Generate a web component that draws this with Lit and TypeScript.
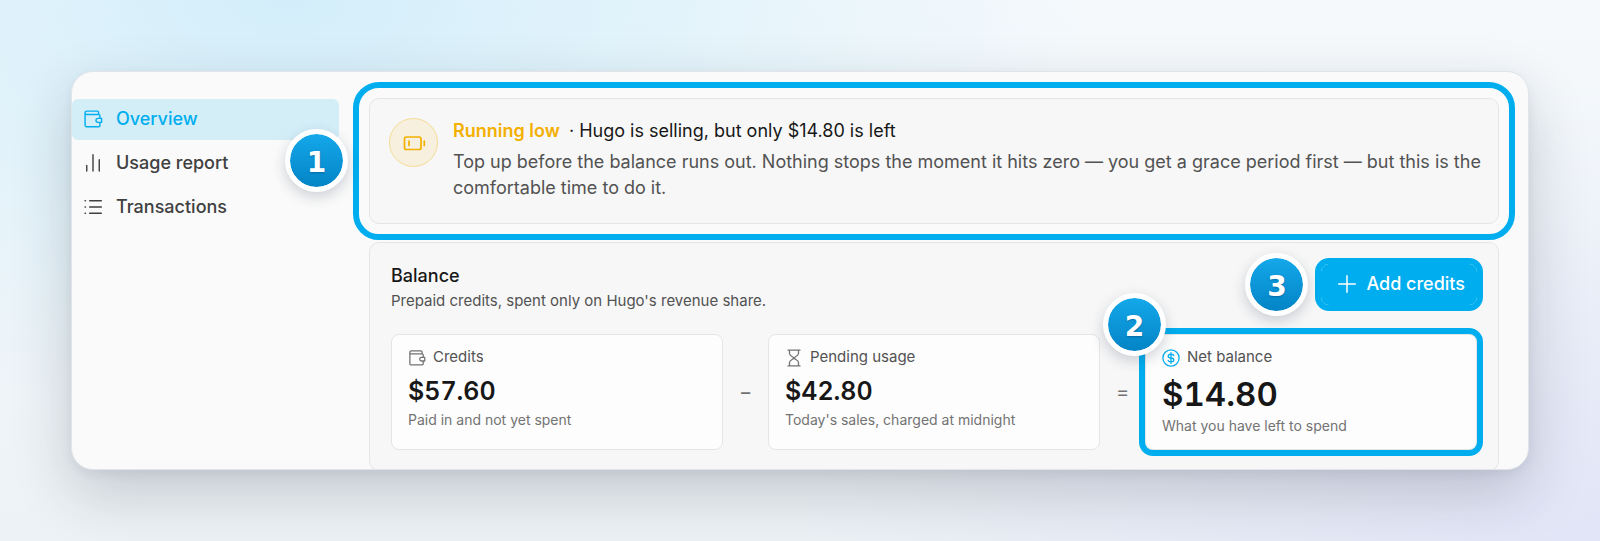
import { LitElement, html, css, svg } from "lit";
import { customElement, property } from "lit/decorators.js";

const icons: Record<string, unknown> = {
  wallet: svg`<path d="M2.500 4.500v15A1.800 1.800 0 0 0 4.300 21.300H18.800A1.500 1.500 0 0 0 20.300 19.800V16.200M20.300 11V8A1.500 1.500 0 0 0 18.800 6.500H4.500A2 2 0 0 1 2.500 4.500 2 2 0 0 1 4.500 2.500H17.200A1.500 1.500 0 0 1 18.700 4V6.500M18 11.200H22.300V16H18A2.400 2.400 0 0 1 18 11.200z"/>`,
  bars: svg`<path d="M4.500 15v6.500M12 2v19.500M19.500 8v13.500"/>`,
  list: svg`<path d="M8 4.500h14M8 12h14M8 19.500h14M2.500 4.500h.5M2.500 12h.5M2.500 19.500h.5"/>`,
  battery: svg`<rect x="2.500" y="6" width="16.500" height="12.500" rx="1.800"/><path d="M7 10v4.500M22.300 10v4.500"/>`,
  hourglass: svg`<path d="M4 1.500h16M4 22.500h16M6 1.500V6C6 9 10.500 10 12 12C13.500 14 18 15 18 18V22.500M18 1.500V6C18 9 13.500 10 12 12C10.500 14 6 15 6 18V22.500"/>`,
  dollar: svg`<circle cx="12" cy="12" r="10.800"/><path d="M12 5v14M15.800 8.800C15.500 7.500 14 7 12 7C9.700 7 8.200 7.900 8.200 9.500C8.200 11.200 9.800 11.700 12 12C14.200 12.300 15.800 12.800 15.800 14.500C15.800 16.100 14.300 17 12 17C10 17 8.500 16.500 8.200 15.200"/>`,
  plus: svg`<path d="M12 1v22M1 12h22"/>`,
};

@customElement("line-icon")
class LineIcon extends LitElement {
  @property() name = "";
  @property() weight = "1.7";
  static styles = css`
    :host { display: block; flex: none; }
    svg { display: block; width: 100%; height: 100%; fill: none; stroke: currentColor; stroke-linecap: round; stroke-linejoin: round; }
  `;
  render() {
    return html`<svg viewBox="0 0 24 24" stroke-width=${this.weight} aria-hidden="true">${icons[this.name]}</svg>`;
  }
}

@customElement("step-badge")
class StepBadge extends LitElement {
  @property() step = "";
  static styles = css`
    :host {
      box-sizing: border-box; display: flex; align-items: center; justify-content: center;
      width: 63px; height: 63px; padding-top: 4px; border: 5px solid #fff; border-radius: 50%;
      background: linear-gradient(#14a8ea, #0384c6) padding-box, #fff border-box;
      box-shadow: 0 5px 14px rgba(20, 40, 70, 0.2);
      color: #fff; font: 700 28px/34px "DejaVu Sans", sans-serif;
      text-shadow: 0 1px 2px rgba(0, 40, 80, 0.35);
    }
  `;
  render() {
    return html`${this.step}`;
  }
}

@customElement("app-root")
class AppRoot extends LitElement {
  static styles = css`
    :host { display: block; font-family: "Inter", "Open Sans", sans-serif; color: #171717; }
    * { box-sizing: border-box; }
    h1, h2, p { margin: 0; font-weight: 400; }
    .page {
      min-height: 100vh; padding: 71px;
      background:
        radial-gradient(ellipse 50% 80% at 18% 0%, #d3eefa 0%, rgba(211, 238, 250, 0) 100%),
        radial-gradient(ellipse 50% 80% at 100% 100%, #e2e5f7 0%, rgba(226, 229, 247, 0) 100%),
        linear-gradient(#f5f9fc, #edf2f6);
    }
    .window {
      display: flex; gap: 30px; padding-right: 29px; overflow: hidden;
      border: 1px solid #e1e5e9; border-radius: 22px; background: #fafafa;
      box-shadow: 0 24px 60px rgba(25, 35, 50, 0.2), 0 4px 12px rgba(25, 35, 50, 0.06);
    }
    .nav { flex: none; width: 267px; padding-top: 27px; display: flex; flex-direction: column; gap: 3px; }
    .link {
      display: flex; align-items: center; gap: 13px; height: 41px; padding: 0 11px 2px;
      border-radius: 6px; color: #404040; font-size: 18px; line-height: 26px; font-weight: 500; text-decoration: none;
    }
    .link line-icon { width: 20px; height: 20px; }
    .link.active { background: #d4eef8; color: #00aeef; }
    .main { flex: 1; min-width: 0; padding-top: 26px; margin-bottom: -2px; display: flex; flex-direction: column; gap: 18px; }
    .panel { border: 1px solid #e5e5e5; border-radius: 10px; background: #f7f7f7; }
    .ring { position: relative; outline: 6px solid #00aeef; }
    .ring > step-badge { position: absolute; z-index: 1; }
    .alert { display: flex; gap: 15px; padding: 19px 10px 22px 19px; outline-offset: 10px; }
    .alert > step-badge { left: -85px; top: calc(50% - 32px); }
    .disc {
      flex: none; display: flex; align-items: center; justify-content: center; width: 49px; height: 49px;
      border: 1px solid #f5dc93; border-radius: 50%; background: #f7f0df; color: #f4b000;
    }
    .disc line-icon { width: 24px; height: 24px; }
    .headline { font-size: 18px; line-height: 26px; }
    .low { color: #f4b000; font-weight: 600; margin-right: 4px; }
    .body { margin-top: 5px; font-size: 18px; line-height: 26px; color: #525252; }
    .balance { padding: 21px 21px 20px; }
    .head { display: flex; align-items: flex-start; justify-content: space-between; }
    .title { font-size: 18px; line-height: 24px; font-weight: 500; }
    .sub { font-size: 15px; line-height: 26px; color: #525252; }
    .actions { position: relative; }
    .actions > step-badge { position: absolute; left: -76px; top: -11px; }
    .add {
      display: flex; align-items: center; gap: 10px; height: 41px; padding: 0 12px 2px 17px;
      border: 0; border-radius: 8px; background: #00aeef; color: #fff; outline: 6px solid #00aeef;
      font: 500 18px/26px "Inter", sans-serif;
    }
    .add line-icon { width: 18px; height: 18px; }
    .cards { display: flex; align-items: stretch; margin-top: 20px; }
    .card { flex: 1; padding: 10px 16px 12px; border: 1px solid #e5e5e5; border-radius: 8px; background: #fdfdfd; }
    .card > step-badge { left: -43px; top: -42px; }
    .op { width: 45px; display: flex; align-items: center; justify-content: center; font-size: 20px; color: #737373; }
    .label { display: flex; align-items: center; gap: 7px; font-size: 15px; line-height: 24px; color: #525252; }
    .label line-icon { width: 18px; height: 18px; margin-top: 2px; color: #737373; }
    .net .label line-icon { color: #00aeef; }
    .amount { font-size: 25px; line-height: 36px; margin-top: 4px; font-weight: 600; font-variant-numeric: tabular-nums; }
    .net .amount { font-size: 33px; line-height: 42px; }
    .note { font-size: 14px; line-height: 22px; color: #737373; }
  `;

  render() {
    return html`
      <div class="page">
        <div class="window">
          <nav class="nav">
            <a class="link active" href="#overview" aria-current="page"><line-icon name="wallet"></line-icon>Overview</a>
            <a class="link" href="#usage"><line-icon name="bars"></line-icon>Usage report</a>
            <a class="link" href="#transactions"><line-icon name="list"></line-icon>Transactions</a>
          </nav>
          <main class="main">
            <section class="panel ring alert">
              <div class="disc"><line-icon name="battery"></line-icon></div>
              <div>
                <h1 class="headline"><span class="low">Running low</span> · Hugo is selling, but only $14.80 is left</h1>
                <p class="body">Top up before the balance runs out. Nothing stops the moment it hits zero — you get a grace period first — but this is the comfortable time to do it.</p>
              </div>
              <step-badge step="1"></step-badge>
            </section>
            <section class="panel balance">
              <div class="head">
                <div>
                  <h2 class="title">Balance</h2>
                  <p class="sub">Prepaid credits, spent only on Hugo's revenue share.</p>
                </div>
                <div class="actions">
                  <button class="add" type="button"><line-icon name="plus" weight="2"></line-icon>Add credits</button>
                  <step-badge step="3"></step-badge>
                </div>
              </div>
              <div class="cards">
                ${this.card("wallet", "Credits", "$57.60", "Paid in and not yet spent")}
                <span class="op">−</span>
                ${this.card("hourglass", "Pending usage", "$42.80", "Today's sales, charged at midnight")}
                <span class="op">=</span>
                ${this.card("dollar", "Net balance", "$14.80", "What you have left to spend", "2")}
              </div>
            </section>
          </main>
        </div>
      </div>
    `;
  }

  private card(icon: string, label: string, amount: string, note: string, step = "") {
    return html`
      <div class="card ${step ? "ring net" : ""}">
        <p class="label"><line-icon name=${icon}></line-icon>${label}</p>
        <p class="amount">${amount}</p>
        <p class="note">${note}</p>
        ${step ? html`<step-badge step=${step}></step-badge>` : ""}
      </div>
    `;
  }
}
